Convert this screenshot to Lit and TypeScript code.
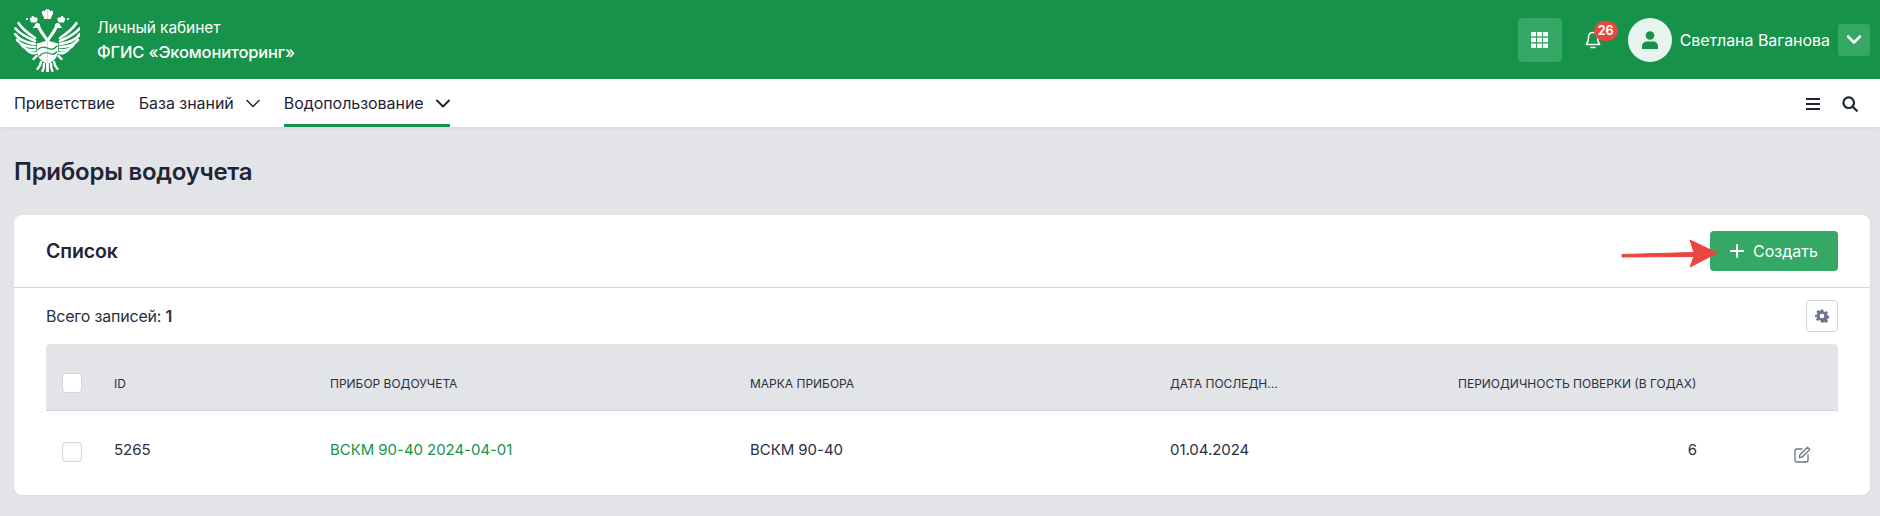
import { LitElement, html, css, svg } from "lit";
import { customElement } from "lit/decorators.js";

const chevron = (c: string, w = 2) => html`<svg width="14" height="9" viewBox="0 0 14 9" fill="none"><path d="M1 1.500l6 6 6-6" stroke=${c} stroke-width=${w} stroke-linecap="round" stroke-linejoin="round"/></svg>`;

const half = svg`
  <path d="M47.500 8c-1.500 0-2.500 1-2.500 2.200-1.500-.8-3.200-.3-3.200 1.300 0 1.300 1 3 2 4.500l.3 2h3.400z"/>
  <path d="M32 15h1.500l.5 1.500c1.500-.5 3 0 3.500 1 .5 1 0 1.800-.7 2.800l-.3 1.200h-5.500l-.3-1.200c-.7-1-1.200-1.800-.7-2.800.3-.7.800-.8 1.500-1z"/>
  <circle cx="27" cy="18" r="1.100"/>
  <g fill="none" stroke="#fff" stroke-linecap="round">
    <g stroke-width="2.600">
      <path d="M35 37C29 33 22 28 18.500 22"/>
      <path d="M35 40C28 37 20 33 15.500 27.500"/>
      <path d="M35 43C28 42 19 39 15 33"/>
      <path d="M35 46C29 46 21 44 17 39"/>
      <path d="M35 49C30 50 25 48 21.500 44"/>
      <path d="M36 52C33 53 29 51.500 26.500 48.500"/>
    </g>
    <path stroke-width="3" d="M38.500 25C40 30 44 34 47 39"/>
    <g stroke-width="2.400">
      <path d="M36.500 55L33.500 58"/>
      <path d="M47.500 63V70.500"/>
      <path d="M44 63C44 66 43.500 68.500 42.500 70"/>
      <path d="M41 61C40.500 64 39 66.500 37.500 68"/>
    </g>
  </g>
  <circle cx="37.500" cy="24.500" r="2.600"/>
  <path d="M36 23l-3.500 4.200 5 -.7z"/>
  <path d="M47.500 39.500L37 42.500c-.5 5-.2 10 1.800 14 1.800 3 5.200 5 8.700 6.500z"/>
`;

const emblem = svg`
  <g fill="#fff">${half}<g transform="translate(95 0) scale(-1 1)">${half}</g></g>
  <g fill="none" stroke="#16924a" stroke-width="1.300" stroke-linecap="round">
    <path d="M38 48.500C42 44.500 46 46.500 50 48c3 1 5-.5 7-3"/>
    <path d="M39.500 55C43 51 48 51.500 51 53c2.500 1 4 0 5.500-2"/>
  </g>`;

@customElement("app-root")
export class AppRoot extends LitElement {
  static styles = css`
    :host { display: block; width: 1880px; height: 516px; overflow: hidden; background: #e2e4e8; font-family: Inter, "Noto Sans", sans-serif; color: #1f2537; position: relative; }
    * { box-sizing: border-box; }
    .top { height: 79px; background: #16924a; display: flex; align-items: center; padding: 0 10px 0 14px; color: #fff; }
    .logo { width: 66px; height: 64px; margin-right: 17px; flex: none; }
    .brand { display: flex; flex-direction: column; gap: 6px; font-size: 15.500px; line-height: 18px; letter-spacing: -0.1px; }
    .brand b { font-weight: 500; font-size: 16.500px; letter-spacing: -0.15px; }
    .spacer { flex: 1; }
    .grid-btn { width: 44px; height: 44px; border-radius: 4px; background: #36a866; display: flex; align-items: center; justify-content: center; }
    .bell { position: relative; width: 66px; height: 44px; display: flex; align-items: center; padding-left: 23px; }
    .badge { position: absolute; left: 32px; top: 3px; height: 20px; min-width: 24px; padding: 0 3px; background: #ea4640; border-radius: 10px; font-size: 12.500px; font-weight: 700; line-height: 20px; text-align: center; color: #fff; }
    .avatar { width: 44px; height: 44px; border-radius: 50%; background: #e7f5ee; display: flex; align-items: center; justify-content: center; margin-right: 8px; }
    .uname { font-size: 16px; font-weight: 400; letter-spacing: -0.05px; margin-right: 8px; white-space: nowrap; }
    .uchev { width: 32px; height: 32px; border-radius: 3px; background: #36a866; display: flex; align-items: center; justify-content: center; }
    .nav { height: 48px; background: #fff; display: flex; align-items: stretch; padding: 0 22px 0 14px; font-size: 16px; box-shadow: 0 1px 4px rgba(30,40,60,.06); }
    .item { display: flex; align-items: center; gap: 12px; margin-right: 24px; letter-spacing: -0.05px; border-bottom: 3px solid transparent; padding-top: 3px; white-space: nowrap; }
    .item.active { border-bottom-color: #16924a; margin-right: 0; }
    .nav-icons { margin-left: auto; display: flex; align-items: center; gap: 22px; padding-top: 1px; }
    .main { padding: 0 10px 0 14px; }
    h1 { margin: 0; height: 88px; display: flex; align-items: center; font-size: 24px; font-weight: 600; letter-spacing: -0.25px; color: #1f2537; }
    .card { background: #fff; border-radius: 8px; height: 280px; box-shadow: 0 1px 3px rgba(30,40,60,.05); }
    .card-head { height: 73px; display: flex; align-items: center; justify-content: space-between; padding: 0 32px; border-bottom: 1px solid #cfd5de; }
    .card-head h2 { margin: 0; font-size: 19.500px; font-weight: 600; letter-spacing: -0.1px; }
    .create { width: 128px; height: 40px; background: #36a866; border-radius: 4px; color: #fff; display: flex; align-items: center; justify-content: center; gap: 9px; font-size: 16px; }
    .body { padding: 0 32px; }
    .count-row { height: 56px; display: flex; align-items: center; justify-content: space-between; font-size: 16px; letter-spacing: -0.2px; color: #2a3042; }
    .count-row b { font-weight: 600; }
    .gear { width: 32px; height: 32px; border: 1px solid #cfd5de; border-radius: 4px; display: flex; align-items: center; justify-content: center; }
    .row { display: grid; grid-template-columns: 68px 216px 420px 420px 288px 239px 1fr; align-items: center; }
    .row.head { height: 67px; background: #e2e4e8; border-bottom: 1px solid #cfd5de; border-radius: 4px 4px 0 0; font-size: 12px; color: #2b3040; padding-top: 12px; white-space: nowrap; }
    .row.data { height: 81px; font-size: 15px; letter-spacing: -0.05px; color: #2a3042; }
    .cell { padding-bottom: 5px; }
    .check { width: 20px; height: 20px; background: #fff; border: 1px solid #cfd5de; border-radius: 4px; margin-left: 16px; }
    .link { color: #16924a; }
    .num { text-align: right; }
    .edit { margin-left: 97px; display: flex; margin-top: 5px; }
    .arrow { position: absolute; left: 1620px; top: 236px; }
  `;

  render() {
    return html`
      <div class="top">
        <svg class="logo" viewBox="14 7 66 64">${emblem}</svg>
        <div class="brand"><span>Личный кабинет</span><b>ФГИС «Экомониторинг»</b></div>
        <div class="spacer"></div>
        <div class="grid-btn">
          <svg width="17" height="16" viewBox="0 0 17 16" fill="#fff">
            <rect x="0" y="0" width="5" height="4.300"/><rect x="6" y="0" width="5" height="4.300"/><rect x="12" y="0" width="5" height="4.300"/>
            <rect x="0" y="5.800" width="5" height="4.300"/><rect x="6" y="5.800" width="5" height="4.300"/><rect x="12" y="5.800" width="5" height="4.300"/>
            <rect x="0" y="11.600" width="5" height="4.300"/><rect x="6" y="11.600" width="5" height="4.300"/><rect x="12" y="11.600" width="5" height="4.300"/>
          </svg>
        </div>
        <div class="bell">
          <svg width="16" height="18" viewBox="0 0 16 18" fill="none" stroke="#fff" stroke-width="1.500" stroke-linecap="round" stroke-linejoin="round"><path d="M8 1.500c-2.800 0-4.500 2.200-4.500 5 0 4-1 5.500-2.200 7h13.400c-1.200-1.500-2.200-3-2.200-7 0-2.800-1.700-5-4.500-5z"/><path d="M6 16.500h4"/></svg>
          <span class="badge">26</span>
        </div>
        <div class="avatar">
          <svg width="16" height="18" viewBox="0 0 16 18" fill="#16924a"><circle cx="8" cy="4.500" r="4.300"/><path d="M0 18v-2.500C0 12 2.500 10.500 5 10.500h6c2.500 0 5 1.500 5 5V18z"/></svg>
        </div>
        <span class="uname">Светлана Ваганова</span>
        <div class="uchev">${chevron("#fff", 2.500)}</div>
      </div>
      <div class="nav">
        <div class="item">Приветствие</div>
        <div class="item">База знаний ${chevron("#1f2537", 1.500)}</div>
        <div class="item active">Водопользование ${chevron("#1f2537", 2)}</div>
        <div class="nav-icons">
          <svg width="14" height="12" viewBox="0 0 14 12" fill="#1f2537"><rect y="0" width="14" height="2"/><rect y="5" width="14" height="2"/><rect y="10" width="14" height="2"/></svg>
          <svg width="16" height="16" viewBox="0 0 16 16" fill="none" stroke="#1f2537" stroke-width="2.200" stroke-linecap="round"><circle cx="6.700" cy="6.700" r="5.300"/><path d="M11 11l3.800 3.800"/></svg>
        </div>
      </div>
      <div class="main">
        <h1>Приборы водоучета</h1>
        <div class="card">
          <div class="card-head">
            <h2>Список</h2>
            <div class="create">
              <svg width="14" height="14" viewBox="0 0 14 14" stroke="#fff" stroke-width="2" stroke-linecap="round"><path d="M7 1v12M1 7h12"/></svg>
              Создать
            </div>
          </div>
          <div class="body">
            <div class="count-row">
              <span>Всего записей: <b>1</b></span>
              <div class="gear">
                <svg width="14" height="14" viewBox="0 0 24 24" fill="#6b7689"><path fill-rule="evenodd" d="M10 1h4l.7 3.200 2 .9 2.800-1.700 2.800 2.800-1.700 2.800.9 2 3.200.7v4l-3.200.7-.9 2 1.700 2.800-2.800 2.800-2.800-1.700-2 .9L14 23h-4l-.7-3.200-2-.9-2.800 1.700-2.800-2.800 1.700-2.800-.9-2L0 14v-4l3.200-.7.9-2L2.400 4.500 5.200 1.700 8 3.400l2-.9zM12 8a4 4 0 100 8 4 4 0 000-8z"/></svg>
              </div>
            </div>
            <div class="row head">
              <div class="check"></div><div>ID</div><div>ПРИБОР ВОДОУЧЕТА</div><div>МАРКА ПРИБОРА</div><div>ДАТА ПОСЛЕДН...</div><div>ПЕРИОДИЧНОСТЬ ПОВЕРКИ (В ГОДАХ)</div><div></div>
            </div>
            <div class="row data">
              <div class="check"></div><div class="cell">5265</div><div class="cell link">ВСКМ 90-40 2024-04-01</div><div class="cell">ВСКМ 90-40</div><div class="cell">01.04.2024</div><div class="cell num">6</div>
              <div class="edit">
                <svg width="17" height="17" viewBox="0 0 17 17" fill="none" stroke="#6b7689" stroke-width="1.300" stroke-linecap="round" stroke-linejoin="round"><path d="M8 3H2.500A1.500 1.500 0 001 4.500v10A1.500 1.500 0 002.500 16h10a1.500 1.500 0 001.500-1.500V9"/><path d="M13.500 1.200l2.300 2.300-7.500 7.500-3 .7.700-3z"/></svg>
              </div>
            </div>
          </div>
        </div>
      </div>
      <svg class="arrow" width="100" height="40" viewBox="0 0 100 40"><path d="M2 18.500L74 16.500 70 4 97 17 70 31 74 20.500 2 21z" fill="#ea4640" stroke="#ea4640" stroke-width="1" stroke-linejoin="round"/></svg>
    `;
  }
}
